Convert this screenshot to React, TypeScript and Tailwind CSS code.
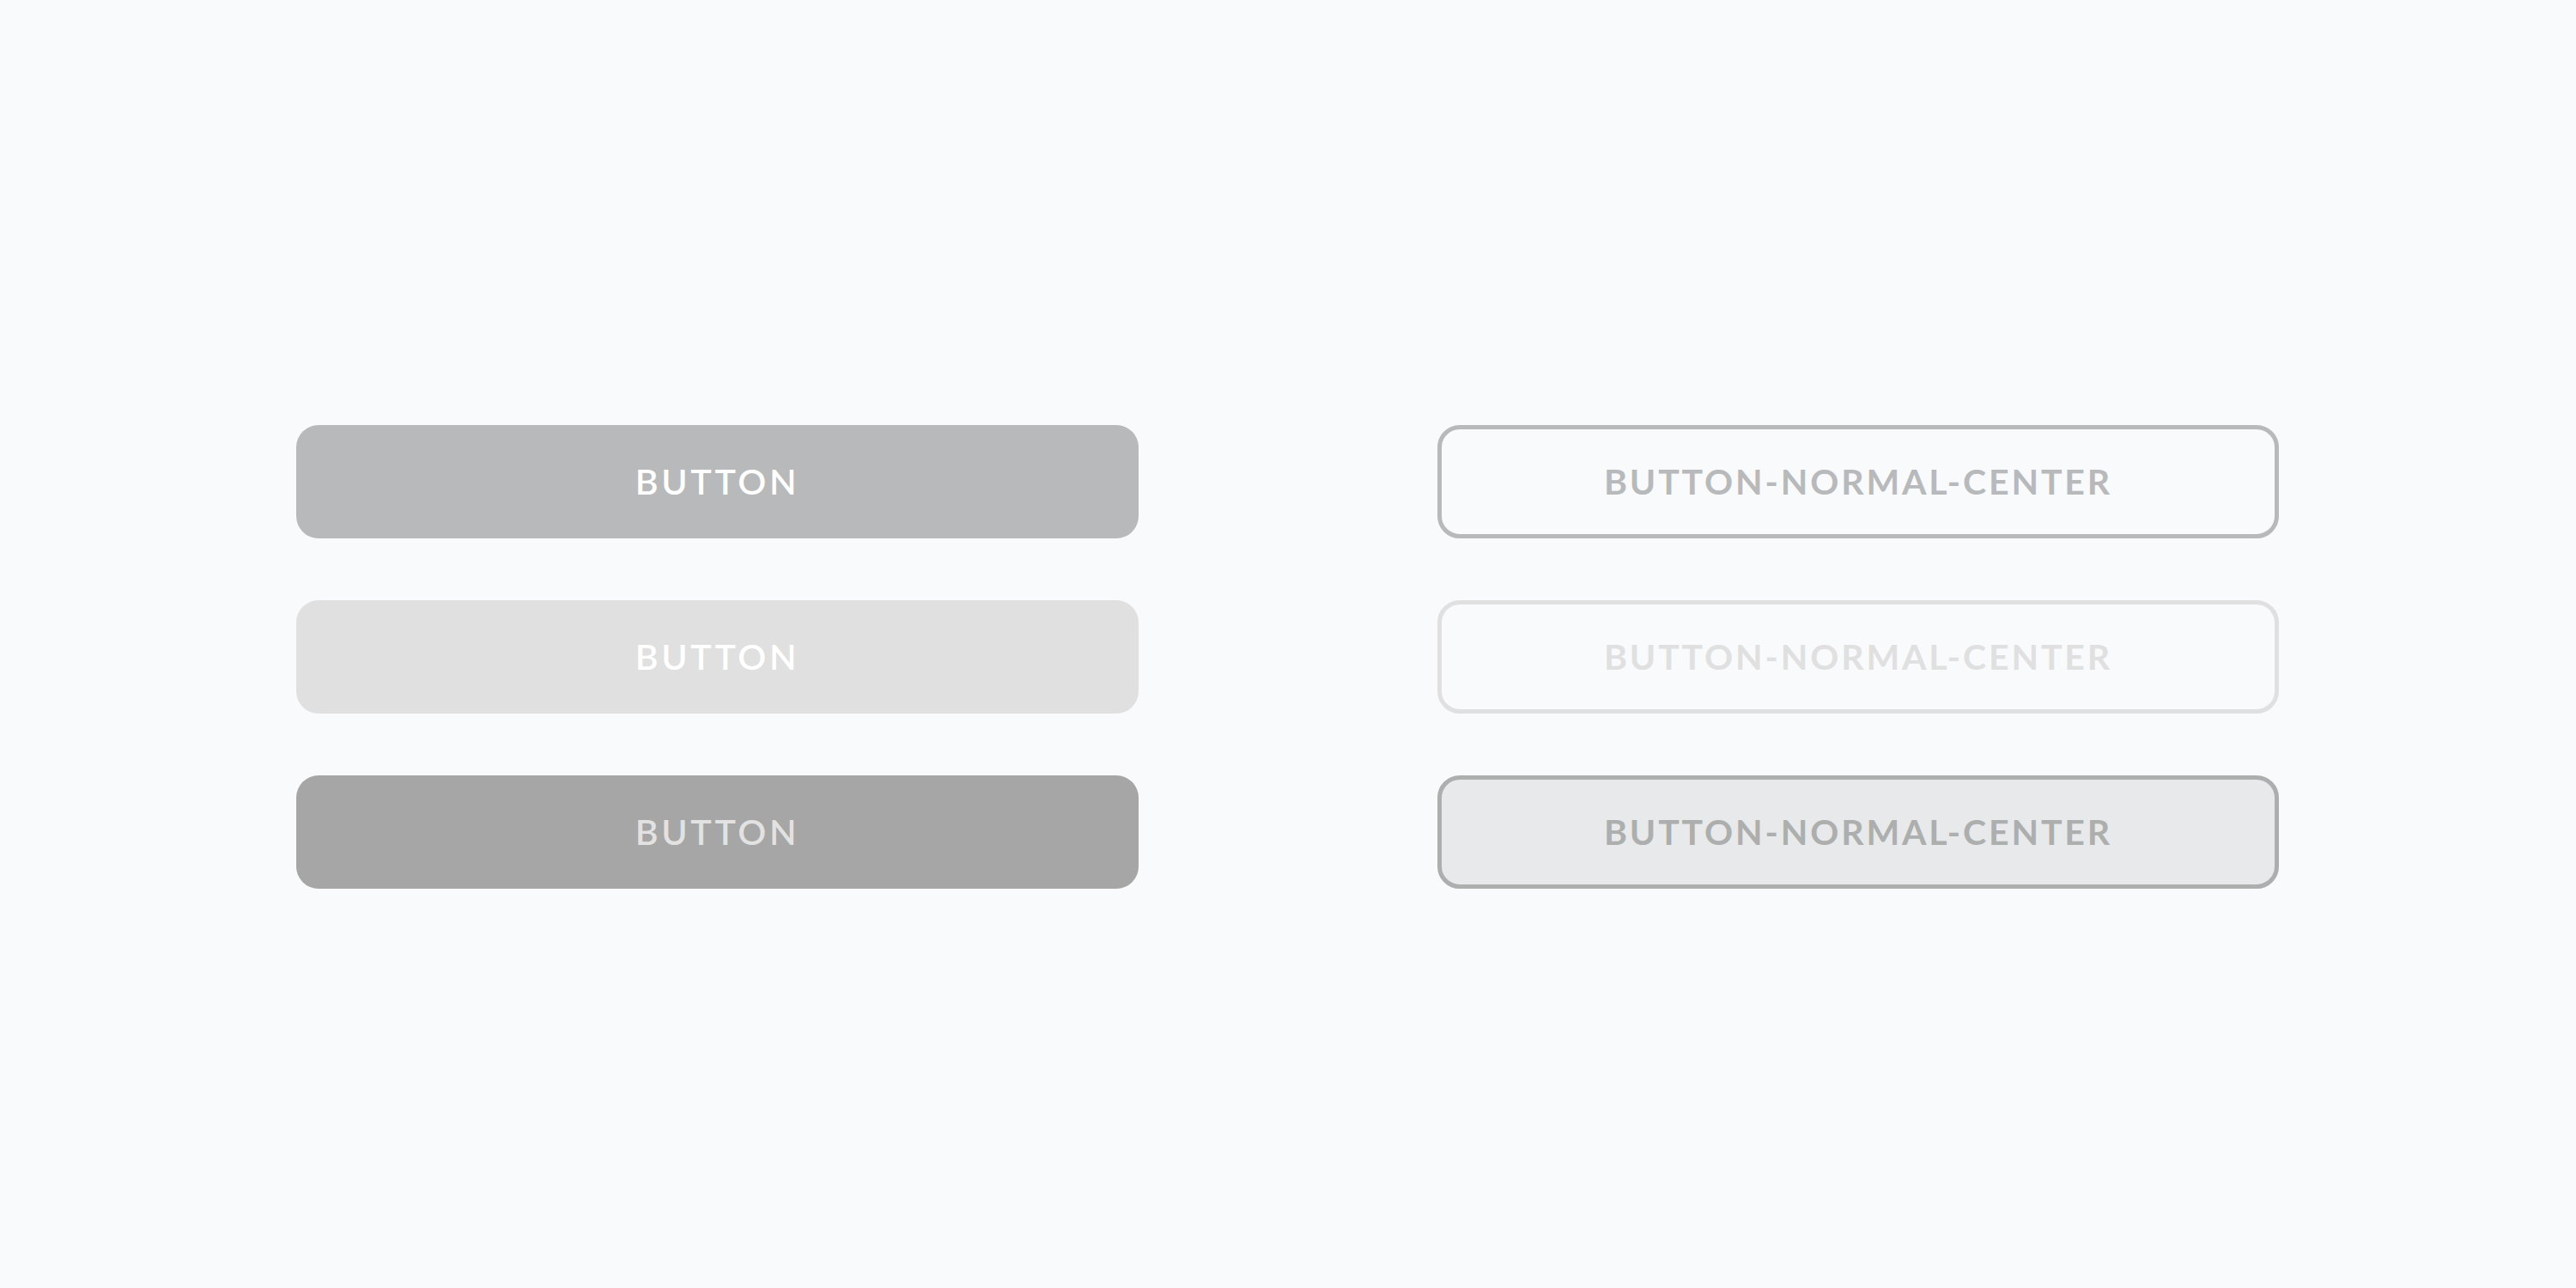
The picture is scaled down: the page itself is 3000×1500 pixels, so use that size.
import React from "react";

const App = () => {
  const solid = [
    { id: 1, cls: "bg-[#b8b9ba] text-white" },
    { id: 2, cls: "bg-[#e0e0e0] text-white" },
    { id: 3, cls: "bg-[#a5a6a5] text-[#e2e2e2]" },
  ];

  const outline = [
    { id: 1, cls: "border-[#b8b9bb] text-[#b8b9bb] bg-transparent" },
    { id: 2, cls: "border-[#e0e0e1] text-[#e0e0e1] bg-transparent" },
    { id: 3, cls: "border-[#adaeae] text-[#adaeae] bg-[#e8e9ea]" },
  ];

  return (
    <div
      className="w-[3000px] h-[1500px] bg-[#f9fafc] pt-[495px] px-[345px]"
      style={{ fontFamily: "Lato, 'Open Sans', sans-serif" }}
    >
      <div className="grid grid-cols-2 gap-x-[348px]">
        <div className="flex flex-col gap-[72px]">
          {solid.map((b) => (
            <button
              key={b.id}
              className={`h-[132px] w-[981px] rounded-[26px] flex items-center justify-center text-[41px] font-semibold tracking-[0.09em] ${b.cls}`}
            >
              BUTTON
            </button>
          ))}
        </div>
        <div className="flex flex-col gap-[72px]">
          {outline.map((b) => (
            <button
              key={b.id}
              className={`h-[132px] w-[980px] rounded-[26px] border-[5px] flex items-center justify-center text-[41px] font-bold tracking-[0.07em] ${b.cls}`}
            >
              BUTTON-NORMAL-CENTER
            </button>
          ))}
        </div>
      </div>
    </div>
  );
};

export default App;
